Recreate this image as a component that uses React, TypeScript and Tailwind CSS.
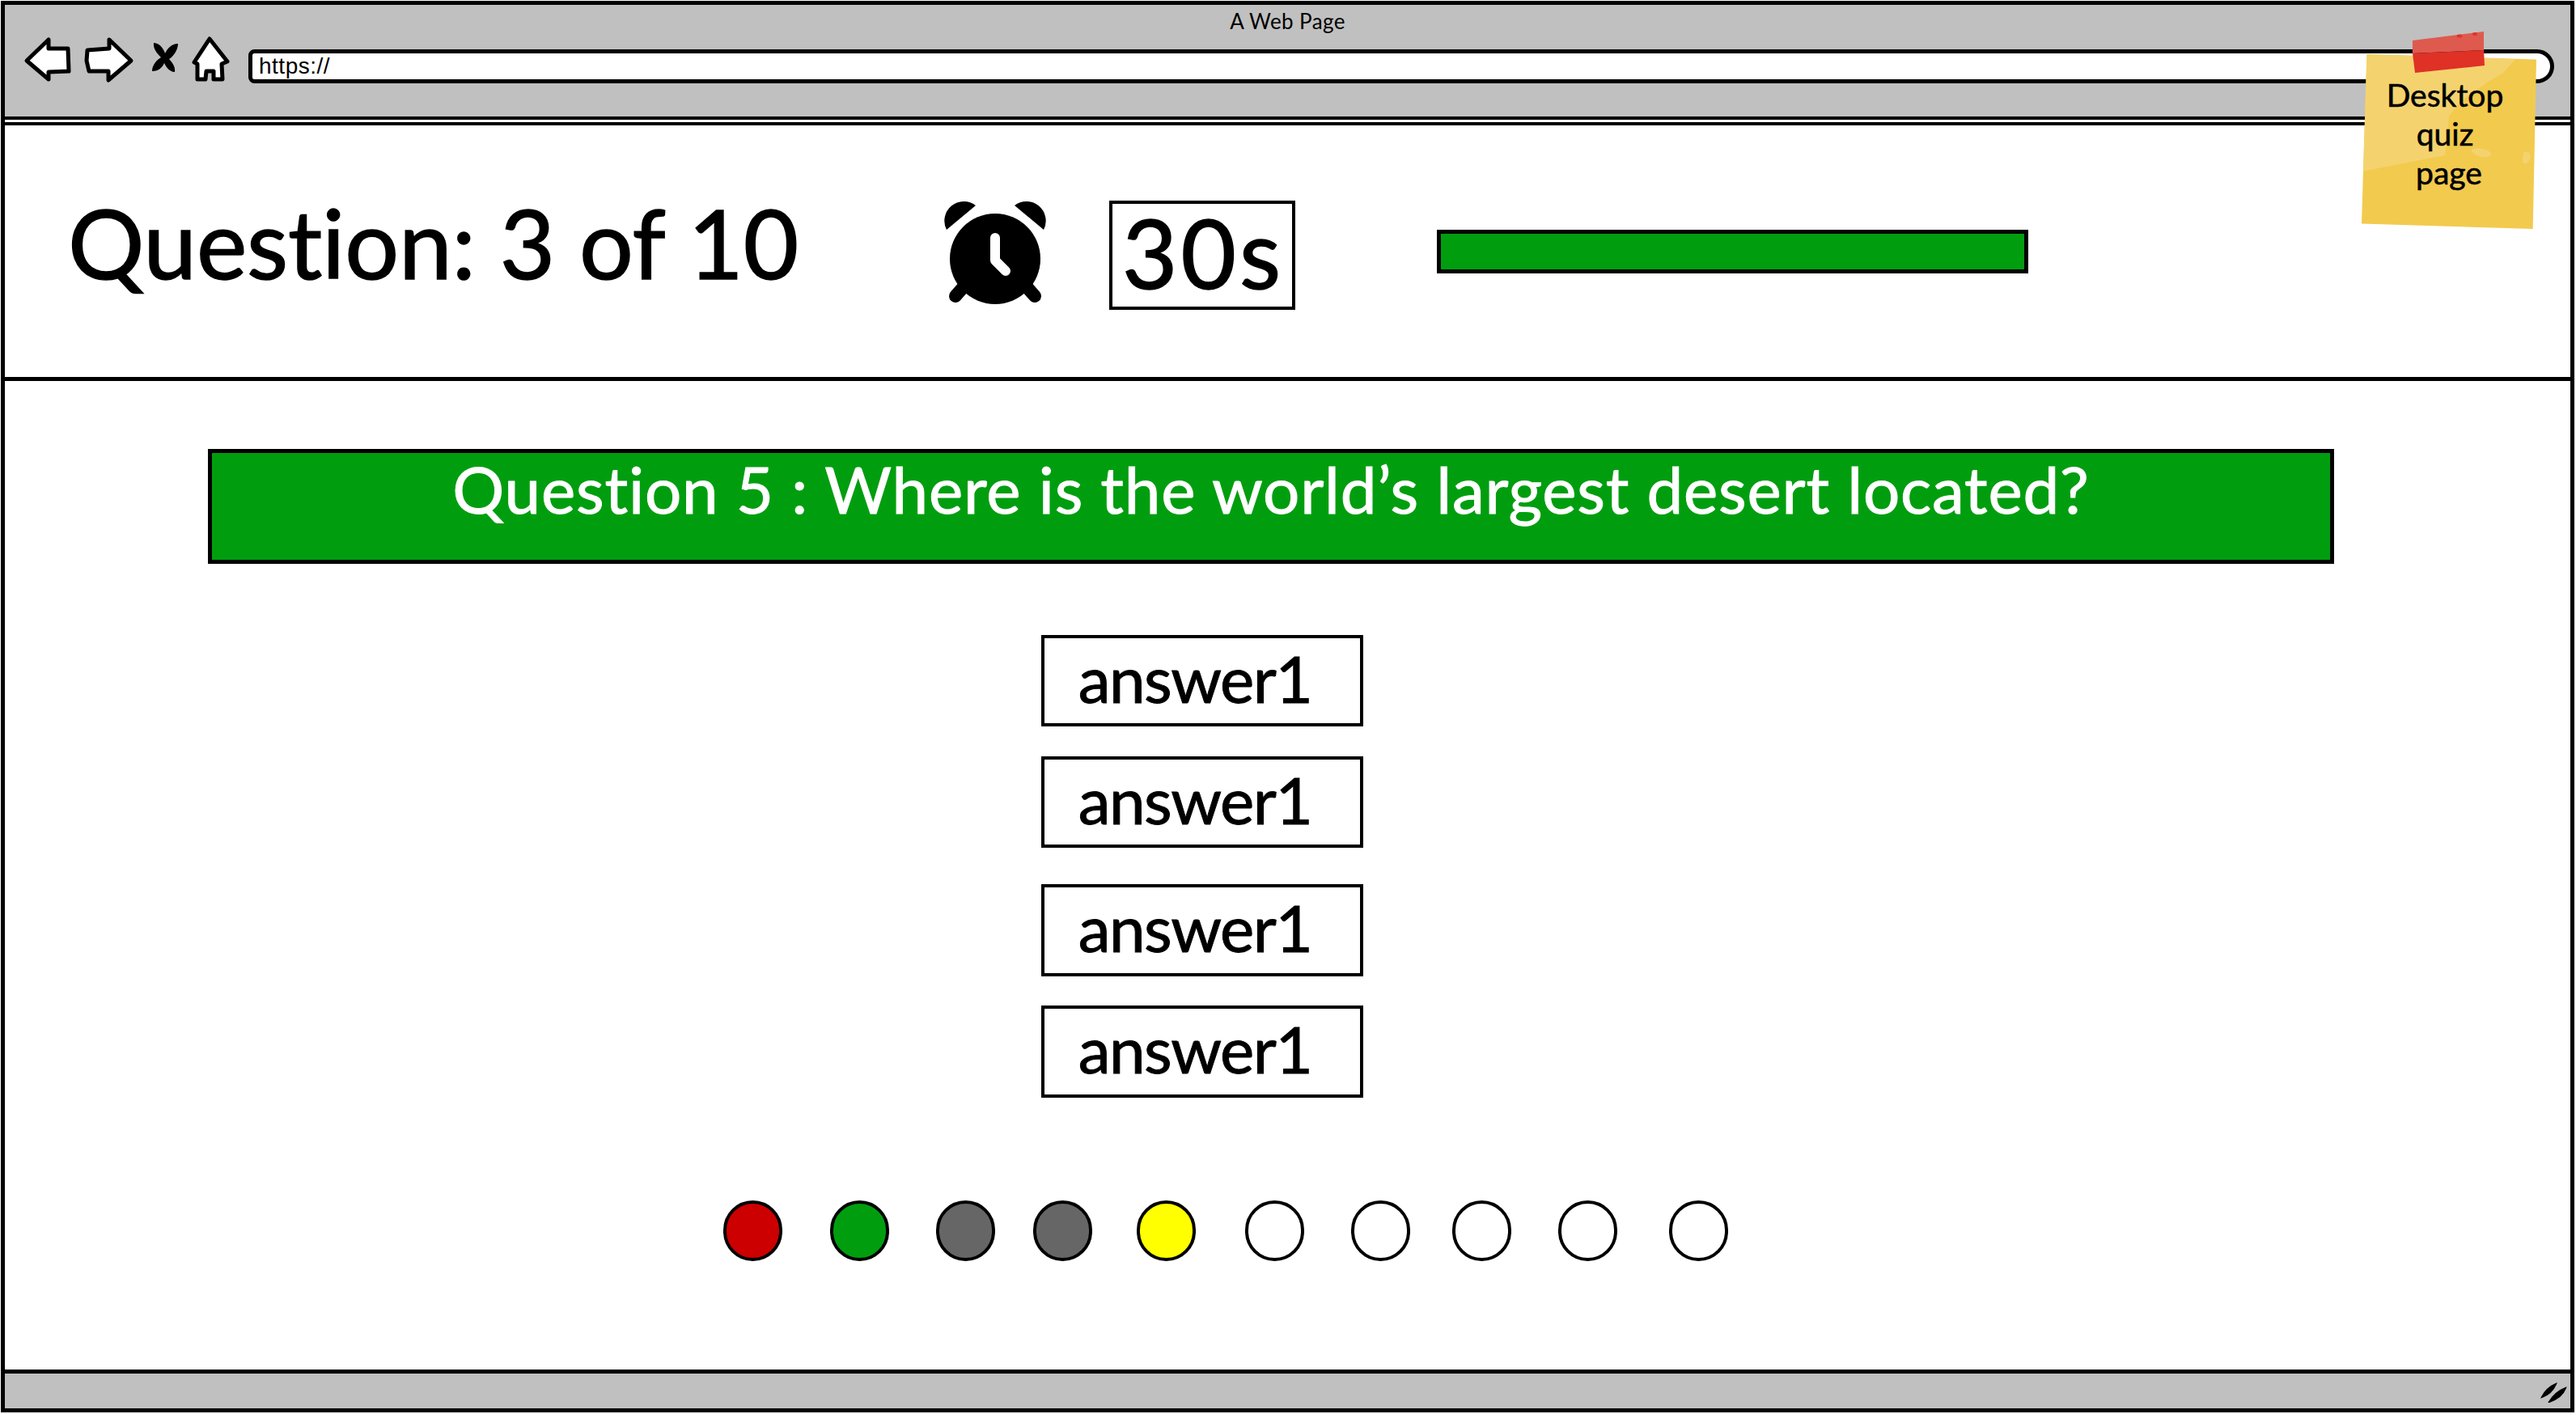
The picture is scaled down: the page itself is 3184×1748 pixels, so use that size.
const font = "[font-family:Lato,'Open_Sans',sans-serif]";

function Back() {
  return (
    <svg width="64" height="64" viewBox="28 42 64 64" className="shrink-0">
      <path d="M33 75 L60 49 L60 60 L84 60 L85 88 L60 89 L60 98 Z" fill="#fff" stroke="#000" strokeWidth="5" strokeLinejoin="round" />
    </svg>
  );
}
function Forward() {
  return (
    <svg width="64" height="64" viewBox="102 42 64 64" className="shrink-0">
      <path d="M108 62 L135 60 L135 49 L162 75 L134 99 L134 88 L110 88 L107 75 Z" fill="#fff" stroke="#000" strokeWidth="5" strokeLinejoin="round" />
    </svg>
  );
}
function Cross() {
  return (
    <svg width="40" height="64" viewBox="184 42 40 64" className="shrink-0">
      <path d="M190 53 C198 53 203 62 204 66 C207 60 212 54 220 54 C220 62 214 70 209 73 C214 78 217 84 216 89 C209 89 205 82 203 78 C201 83 196 88 188 88 C188 80 194 74 199 71 C194 66 189 60 190 53 Z" fill="#000" />
    </svg>
  );
}
function Home() {
  return (
    <svg width="56" height="64" viewBox="233 42 56 64" className="shrink-0">
      <path d="M259 48 L281 76 L274 79 L275 98 L264 98 L264 88 L255 88 L254 98 L244 98 L244 79 L240 77 Z" fill="#fff" stroke="#000" strokeWidth="5" strokeLinejoin="round" />
    </svg>
  );
}
function Alarm() {
  return (
    <svg width="140" height="140" viewBox="1160 242 140 140" className="shrink-0 mt-[2px]">
      <path d="M1170 284 A24 24 0 0 1 1206 254 Z" fill="#000" />
      <path d="M1290 284 A24 24 0 0 0 1254 254 Z" fill="#000" />
      <circle cx="1230" cy="320" r="56" fill="#000" />
      <path d="M1195 350 L1181 366" stroke="#000" strokeWidth="16" strokeLinecap="round" />
      <path d="M1265 350 L1279 366" stroke="#000" strokeWidth="16" strokeLinecap="round" />
      <path d="M1230 294 L1230 322 L1243 335" fill="none" stroke="#fff" strokeWidth="12" strokeLinecap="round" strokeLinejoin="round" />
    </svg>
  );
}
function Grip() {
  return (
    <svg width="36" height="28" viewBox="0 0 36 28">
      <path d="M3 21 C7 13 13 8 20 5 C17 12 11 18 3 21 Z" fill="#000" stroke="#000" strokeWidth="2" />
      <path d="M12 27 C17 19 24 13 32 10 C29 18 21 24 12 27 Z" fill="#000" stroke="#000" strokeWidth="2" />
    </svg>
  );
}

const answers = [
  { id: 1, cls: "mt-0 h-[113px]" },
  { id: 2, cls: "mt-[37px] h-[113px]" },
  { id: 3, cls: "mt-[45px] h-[114px]" },
  { id: 4, cls: "mt-[36px] h-[114px]" },
];

const dots = [
  { bg: "bg-[#cc0000]", ml: "ml-0" },
  { bg: "bg-[#009e0f]", ml: "ml-[59px]" },
  { bg: "bg-[#666666]", ml: "ml-[58px]" },
  { bg: "bg-[#666666]", ml: "ml-[47px]" },
  { bg: "bg-[#ffff00]", ml: "ml-[55px]" },
  { bg: "bg-white", ml: "ml-[61px]" },
  { bg: "bg-white", ml: "ml-[58px]" },
  { bg: "bg-white", ml: "ml-[52px]" },
  { bg: "bg-white", ml: "ml-[58px]" },
  { bg: "bg-white", ml: "ml-[64px]" },
];

export default function App() {
  return (
    <div className={`relative w-[3184px] h-[1748px] bg-white overflow-hidden text-black [font-variant-ligatures:none] ${font}`}>
      <div className="ml-[1px] mt-[1px] w-[3181px] h-[1745px] border-[5px] border-black flex flex-col">
        {/* browser toolbar */}
        <div className="h-[138px] shrink-0 bg-[#c0c0c0] flex flex-col">
          <div className="h-[36px] pt-[6px] text-center text-[26px] leading-[28px] tracking-[0.4px]">A Web Page</div>
          <div className="flex items-center pl-[22px]">
            <Back />
            <div className="ml-[10px]"><Forward /></div>
            <div className="ml-[18px]"><Cross /></div>
            <div className="ml-[9px]"><Home /></div>
            <div className="ml-[18px] mt-[16px] flex-1 mr-[20px] h-[42px] bg-white border-[5px] border-black rounded-l-[10px] rounded-r-[28px] pl-[8px] flex items-center text-[28px] tracking-[0.5px] [font-family:'Liberation_Sans',sans-serif]">
              https://
            </div>
          </div>
        </div>
        <div className="h-[11px] shrink-0 bg-white border-y-[4px] border-black" />

        {/* header */}
        <div className="h-[316px] shrink-0 border-b-[5px] border-black flex items-center">
          <div className="w-[1154px] pl-[78px] mb-[22px] text-[118px] leading-[140px] tracking-[-0.2px] [-webkit-text-stroke-width:1.5px] whitespace-nowrap">Question: 3 of 10</div>
          <Alarm />
          <div className="ml-[71px] mt-[10px] w-[230px] h-[135px] border-[4px] border-black flex items-center justify-center pb-[8px] pl-[2px] text-[118px] leading-none tracking-[4px] [-webkit-text-stroke-width:1.5px]">30s</div>
          <div className="ml-[175px] w-[731px] h-[54px] bg-[#009e0f] border-[5px] border-black" />
        </div>

        {/* main */}
        <div className="flex-1 flex flex-col pt-[84px]">
          <div className="ml-[251px] w-[2628px] h-[142px] shrink-0 bg-[#009e0f] border-[5px] border-black text-center text-white text-[80px] leading-[88px] tracking-[0.8px] [-webkit-text-stroke-width:1px]">
            Question 5 : Where is the world’s largest desert located?
          </div>

          <div className="flex flex-col pl-[1281px] mt-[88px]">
            {answers.map((a) => (
              <div key={a.id} className={`w-[398px] border-[4px] border-black flex items-center justify-center pb-[8px] pr-[18px] text-[80px] leading-none tracking-[-1.5px] [-webkit-text-stroke-width:1px] ${a.cls}`}>
                answer1
              </div>
            ))}
          </div>

          <div className="flex pl-[888px] mt-[127px]">
            {dots.map((d, i) => (
              <div key={i} className={`w-[73px] h-[75px] shrink-0 rounded-full border-[4px] border-black ${d.bg} ${d.ml}`} />
            ))}
          </div>
        </div>

        {/* status bar */}
        <div className="h-[48px] shrink-0 bg-[#c0c0c0] border-t-[5px] border-black flex items-center justify-end pr-[2px]">
          <Grip />
        </div>
      </div>

      {/* sticky note */}
      <div className="absolute left-[2919px] top-[67px] w-[216px] h-[216px] bg-[#f2ca4e] [clip-path:polygon(3%_0,100%_3%,98%_100%,0_97%)]">
        <svg width="216" height="216" viewBox="0 0 216 216" className="absolute inset-0">
          <path d="M0 0 L190 6 L175 23 L158 33 L125 56 L108 76 L103 125 L0 145 Z" fill="#f4d36f" />
          <path d="M135 118 C145 114 160 118 160 124 C155 130 140 128 135 118 Z" fill="#f4d36f" />
          <path d="M200 122 C205 118 210 122 208 130 C204 138 196 138 200 122 Z" fill="#f4d36f" />
        </svg>
        <div className="relative pt-[26px] flex flex-col text-[39px] leading-[48px] [-webkit-text-stroke-width:0.6px] text-center">
          <span className="-ml-[10px]">Desktop</span>
          <span className="-ml-[10px]">quiz</span>
          <span>page</span>
        </div>
      </div>
      <svg width="96" height="56" viewBox="2978 37 96 56" className="absolute left-[2978px] top-[37px]">
        <path d="M2982 50 L3070 39 L3070 62 L2982 66 Z" fill="#df5a4e" />
        <path d="M2982 66 L3070 62 L3071 81 L2985 90 Z" fill="#df3126" />
        <ellipse cx="3040" cy="44.5" rx="3.5" ry="2" fill="#e0342a" />
        <ellipse cx="3059" cy="42" rx="3" ry="2" fill="#e0342a" />
      </svg>
    </div>
  );
}
